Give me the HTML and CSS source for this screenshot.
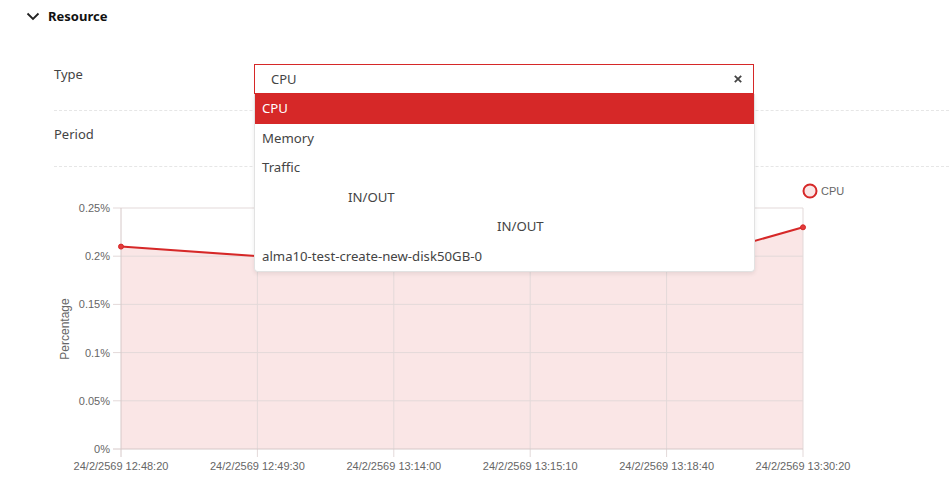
FILE: index.html
```html
<html>
	<head>
		<meta charset="utf-8" />
		<title>Resource</title>
		<link rel="stylesheet" href="styles.css">
	</head>
	<body>
		<div class="section-head">
			<svg class="chevron" width="14" height="9" viewBox="0 0 14 9"><path d="M1.5 1.5 L7 7 L12.5 1.5" fill="none" stroke="#222" stroke-width="1.8"/></svg>
			<span class="section-title">Resource</span>
		</div>

		<div class="form">
			<div class="row row-type">
				<div class="label">Type</div>
				<div class="select">
					<div class="select-box">
						<span class="select-value">CPU</span>
						<svg class="select-clear" width="8" height="8" viewBox="0 0 8 8"><path d="M0.8 0.8 L7.2 7.2 M7.2 0.8 L0.8 7.2" stroke="#444" stroke-width="1.8"/></svg>
					</div>
					<ul class="options">
						<li class="option active">CPU</li>
						<li class="option">Memory</li>
						<li class="option">Traffic</li>
						<li class="option"><span class="indent-1">IN/OUT</span></li>
						<li class="option"><span class="indent-2">IN/OUT</span></li>
						<li class="option">alma10-test-create-new-disk50GB-0</li>
					</ul>
				</div>
			</div>
			<div class="row row-period">
				<div class="label">Period</div>
				<div class="period"></div>
			</div>
		</div>

		<div class="chart">
			<svg width="949" height="320" viewBox="0 167 949 320">
				<!-- legend -->
				<circle cx="810" cy="191" r="6.5" fill="#fae6e6" stroke="#d62828" stroke-width="2"/>
				<text x="821" y="195" class="legend">CPU</text>

				<!-- area + grid -->
				<polygon points="121,246.6 257.4,256.2 393.8,256.2 530.2,256.2 666.6,265.8 803,227.3 803,449 121,449" fill="#fae6e6"/>
				<g class="grid">
					<line x1="113" y1="208" x2="803" y2="208"/>
					<line x1="113" y1="256.2" x2="803" y2="256.2"/>
					<line x1="113" y1="304.4" x2="803" y2="304.4"/>
					<line x1="113" y1="352.6" x2="803" y2="352.6"/>
					<line x1="113" y1="400.8" x2="803" y2="400.8"/>
					<line x1="257.4" y1="208" x2="257.4" y2="457"/>
					<line x1="393.8" y1="208" x2="393.8" y2="457"/>
					<line x1="530.2" y1="208" x2="530.2" y2="457"/>
					<line x1="666.6" y1="208" x2="666.6" y2="457"/>
					<line x1="803" y1="208" x2="803" y2="457"/>
				</g>
				<g class="axis">
					<line x1="121" y1="208" x2="121" y2="457"/>
					<line x1="113" y1="449" x2="803" y2="449"/>
				</g>

				<polyline points="121,246.6 257.4,256.2 393.8,256.2 530.2,256.2 666.6,265.8 803,227.3" fill="none" stroke="#d62828" stroke-width="2"/>
				<g class="dots">
					<circle cx="121" cy="246.6" r="2.5"/>
					<circle cx="257.4" cy="256.2" r="2.5"/>
					<circle cx="393.8" cy="256.2" r="2.5"/>
					<circle cx="530.2" cy="256.2" r="2.5"/>
					<circle cx="666.6" cy="265.8" r="2.5"/>
					<circle cx="803" cy="227.3" r="2.5"/>
				</g>

				<g class="ticks-y">
					<text x="110" y="212">0.25%</text>
					<text x="110" y="260.2">0.2%</text>
					<text x="110" y="308.4">0.15%</text>
					<text x="110" y="356.6">0.1%</text>
					<text x="110" y="404.8">0.05%</text>
					<text x="110" y="453">0%</text>
				</g>
				<g class="ticks-x">
					<text x="121" y="470">24/2/2569 12:48:20</text>
					<text x="257.4" y="470">24/2/2569 12:49:30</text>
					<text x="393.8" y="470">24/2/2569 13:14:00</text>
					<text x="530.2" y="470">24/2/2569 13:15:10</text>
					<text x="666.6" y="470">24/2/2569 13:18:40</text>
					<text x="803" y="470">24/2/2569 13:30:20</text>
				</g>
				<text class="axis-title" transform="translate(69 329) rotate(-90)">Percentage</text>
			</svg>
		</div>
	</body>
</html>
```

FILE: styles.css
```css
body{
	margin: 0;
	width: 949px;
	font-family: "Noto Sans", "Open Sans", sans-serif;
	color: #444;
	background: #fff;
}
.section-head{
	height: 32px;
	display: flex;
	align-items: center;
	padding-left: 26px;
}
.chevron{
	margin-right: 8px;
}
.section-title{
	font-size: 13px;
	font-weight: bold;
	color: #111;
}
.form{
	margin-top: 19px;
	padding-left: 54px;
}
.row{
	display: flex;
	padding: 13px 0 16px;
	border-bottom: 1px dashed #e6e6e6;
}
.label{
	width: 200px;
	font-size: 13px;
	line-height: 20px;
	color: #444;
}
.select{
	position: relative;
	width: 500px;
}
.select-box{
	box-sizing: border-box;
	height: 30px;
	border: 1px solid #d62828;
	display: flex;
	align-items: center;
	justify-content: space-between;
	padding: 0 11px 0 16px;
	font-size: 13px;
}
.select-clear{
	display: block;
}
.options{
	position: absolute;
	top: 30px;
	left: 0;
	width: 499px;
	margin: 0;
	padding: 0;
	list-style: none;
	background: #fff;
	border: 1px solid #e2e2e2;
	border-top: none;
	border-radius: 0 0 4px 4px;
	box-shadow: 0 2px 4px rgba(0,0,0,0.08);
	z-index: 5;
}
.option{
	height: 29.5px;
	line-height: 29.5px;
	padding-left: 7px;
	font-size: 13.2px;
	color: #444;
	white-space: nowrap;
}
.option.active{
	background: #d62828;
	color: #fff;
}
.indent-1{
	margin-left: 86px;
}
.indent-2{
	margin-left: 235px;
}
.period{
	height: 26px;
}
.chart svg{
	display: block;
}
.chart text{
	font-family: "Liberation Sans", Arial, sans-serif;
	font-size: 11px;
	fill: #666;
}
.chart .legend{
	font-size: 11px;
}
.chart .axis-title{
	font-size: 12px;
	text-anchor: middle;
}
.grid line{
	stroke: #e3d9d9;
	stroke-width: 1;
}
.axis line{
	stroke: #d6c8c8;
	stroke-width: 1;
}
.dots circle{
	fill: #e23b3b;
	stroke: #d62828;
	stroke-width: 1;
}
.ticks-y text{
	text-anchor: end;
}
.ticks-x text{
	text-anchor: middle;
}
```
